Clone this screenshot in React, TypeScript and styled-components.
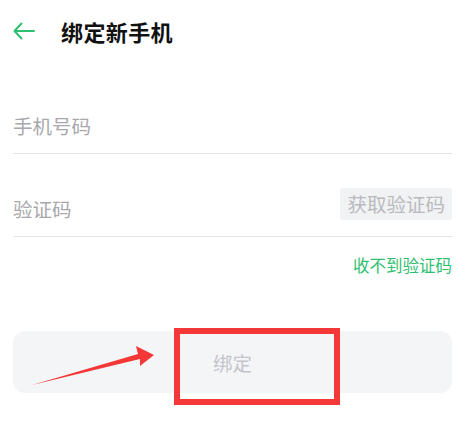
import React from 'react';
import styled, { createGlobalStyle } from 'styled-components';

const GlobalStyle = createGlobalStyle`
  html, body {
    margin: 0;
    padding: 0;
    background: #ffffff;
    font-family: "Noto Sans CJK SC", "Noto Sans", sans-serif;
  }
`;

const Page = styled.div`
  position: relative;
  width: 461px;
  height: 444px;
  overflow: hidden;
  background: #fff;
`;

const Header = styled.div`
  display: flex;
  align-items: center;
  height: 62px;
  padding: 0 12px 0 13px;
  gap: 26px;
`;

const BackIcon = styled.svg`
  width: 22px;
  height: 18px;
  flex-shrink: 0;
`;

const Title = styled.h1`
  margin: 0;
  font-size: 22px;
  font-weight: 700;
  color: #111;
  letter-spacing: 0.4px;
`;

const Form = styled.div`
  padding: 0 9px 0 13px;
`;

const Field = styled.div<{ $top: number }>`
  display: flex;
  align-items: center;
  justify-content: space-between;
  margin-top: ${({ $top }) => $top}px;
  height: 55px;
  border-bottom: 1px solid #e4e4e6;
`;

const Placeholder = styled.span`
  font-size: 19.5px;
  color: #a9a9ad;
`;

const CodeButton = styled.span`
  display: flex;
  align-items: center;
  height: 32px;
  padding: 0 7px;
  margin-bottom: 10px;
  border-radius: 4px;
  background: #f1f2f4;
  font-size: 19.5px;
  color: #b9babe;
`;

const HelpRow = styled.div`
  display: flex;
  justify-content: flex-end;
  padding-top: 16px;
`;

const HelpLink = styled.span`
  font-size: 16.5px;
  color: #2fbf71;
`;

const SubmitButton = styled.div`
  display: flex;
  align-items: center;
  justify-content: center;
  margin-top: 54px;
  height: 62px;
  border-radius: 12px;
  background: #f4f5f7;
  font-size: 19.5px;
  color: #c3c5cb;
`;

const Highlight = styled.div`
  position: absolute;
  left: 174px;
  top: 328px;
  width: 166px;
  height: 77px;
  box-sizing: border-box;
  border: 6px solid #f43838;
`;

const Pointer = styled.svg`
  position: absolute;
  left: 0;
  top: 0;
  pointer-events: none;
`;

export default function App() {
  return (
    <Page>
      <GlobalStyle />
      <Header>
        <BackIcon viewBox="0 0 22 18" fill="none" stroke="#2fbf71" strokeWidth="2" strokeLinecap="round" strokeLinejoin="round">
          <path d="M21 9H1.5M8.5 1.5L1.5 9l7 7.5" />
        </BackIcon>
        <Title>绑定新手机</Title>
      </Header>
      <Form>
        <Field $top={36}>
          <Placeholder>手机号码</Placeholder>
        </Field>
        <Field $top={27}>
          <Placeholder>验证码</Placeholder>
          <CodeButton>获取验证码</CodeButton>
        </Field>
        <HelpRow>
          <HelpLink>收不到验证码</HelpLink>
        </HelpRow>
        <SubmitButton>绑定</SubmitButton>
      </Form>
      <Highlight />
      <Pointer width="461" height="444" viewBox="0 0 461 444">
        <polygon points="32,385 138,354 136,346 154,355 140,366 140,359" fill="#f43838" />
      </Pointer>
    </Page>
  );
}
